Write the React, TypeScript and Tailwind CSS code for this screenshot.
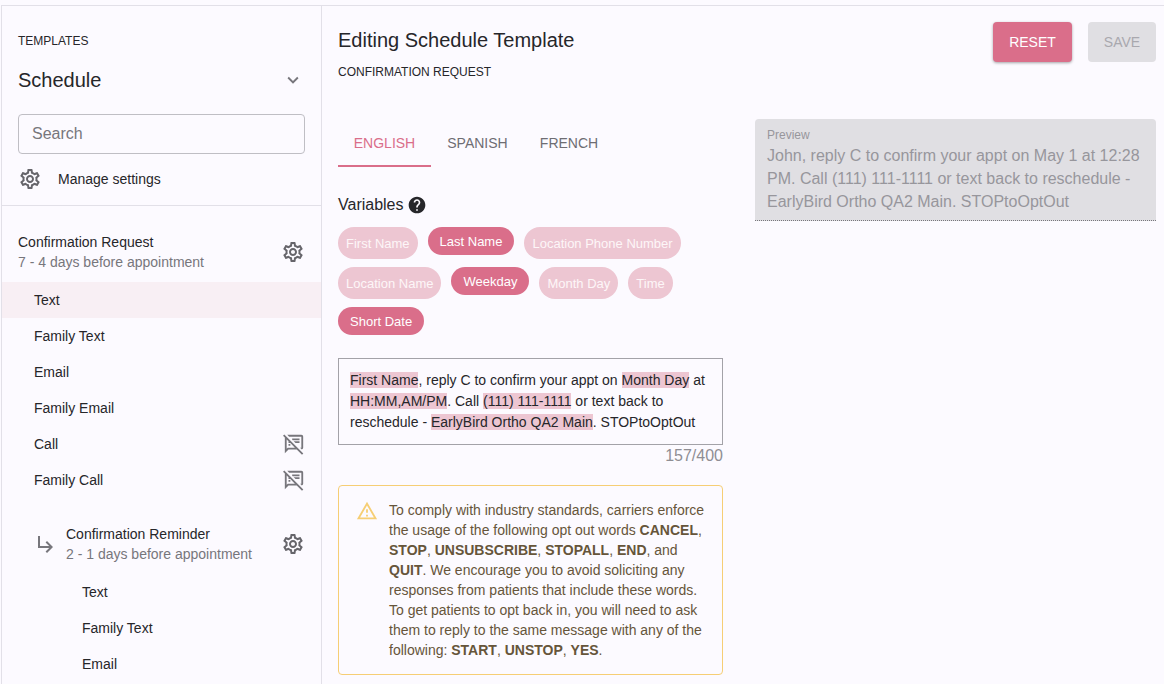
import React from "react";
import {
  MdExpandMore,
  MdHelp,
  MdOutlineSettings,
  MdOutlineSpeakerNotesOff,
  MdOutlineWarningAmber,
  MdSubdirectoryArrowRight,
} from "react-icons/md";

const FIRST_ROWS = [
  { label: "Text", active: true },
  { label: "Family Text" },
  { label: "Email" },
  { label: "Family Email" },
  { label: "Call", off: true },
  { label: "Family Call", off: true },
];

const CHIP_ROWS = [
  [
    { label: "First Name" },
    { label: "Last Name", on: true },
    { label: "Location Phone Number" },
  ],
  [
    { label: "Location Name" },
    { label: "Weekday", on: true },
    { label: "Month Day" },
    { label: "Time" },
  ],
  [{ label: "Short Date", on: true }],
];

function Chip({ label, on }: { label: string; on?: boolean }) {
  if (on) {
    return (
      <span className="flex h-7 items-center rounded-full bg-[#da6e8a] px-3 pt-px text-[13px] text-white">
        {label}
      </span>
    );
  }
  return (
    <span className="flex h-8 items-center rounded-full bg-[#edc6d2] px-2 pt-px text-[13px] text-[#fdf6f8]">
      {label}
    </span>
  );
}

function Mark({ children }: { children: React.ReactNode }) {
  return <span className="bg-[#edc6d2]">{children}</span>;
}

function Sidebar() {
  return (
    <aside className="w-[320px] shrink-0 border-r border-[#e2e0e8]">
      <div className="px-4 pt-[26px]">
        <div className="text-xs leading-[18px] text-[#26262a]">TEMPLATES</div>
        <div className="mt-[16px] flex h-7 items-center justify-between pr-px">
          <span className="text-xl text-[#26262a]">Schedule</span>
          <MdExpandMore className="text-[22px] text-[#77767c]" />
        </div>
        <div className="mt-[20px] flex h-10 items-center rounded border border-[#bfbec4] px-[13px] text-base text-[#77767c]">
          Search
        </div>
        <div className="mt-[13px] flex h-[24px] items-center">
          <MdOutlineSettings className="text-[24px] text-[#66656b]" />
          <span className="ml-4 text-sm text-[#26262a]">Manage settings</span>
        </div>
      </div>
      <div className="mt-[14px] border-t border-[#e2e0e8] pt-[26px]">
        <div className="flex h-10 items-center justify-between pl-4 pr-4">
          <div>
            <div className="text-sm leading-5 text-[#26262a]">Confirmation Request</div>
            <div className="text-sm leading-5 text-[#77767c]">7 - 4 days before appointment</div>
          </div>
          <MdOutlineSettings className="text-[24px] text-[#66656b]" />
        </div>
        <div className="mt-[10px]">
          {FIRST_ROWS.map((row) => (
            <div
              key={row.label}
              className={`flex h-9 items-center justify-between pl-8 pr-4 text-sm text-[#26262a] ${row.active ? "bg-[#f8eff4]" : ""}`}
            >
              {row.label}
              {row.off && <MdOutlineSpeakerNotesOff className="text-[22px] text-[#77767c]" />}
            </div>
          ))}
        </div>
        <div className="mt-[26px] flex h-10 items-center justify-between pl-8 pr-4">
          <div className="flex items-center">
            <MdSubdirectoryArrowRight className="text-[24px] text-[#77767c]" />
            <div className="ml-2">
              <div className="text-sm leading-5 text-[#26262a]">Confirmation Reminder</div>
              <div className="text-sm leading-5 text-[#77767c]">2 - 1 days before appointment</div>
            </div>
          </div>
          <MdOutlineSettings className="text-[24px] text-[#66656b]" />
        </div>
        <div className="mt-[10px]">
          {["Text", "Family Text", "Email"].map((label) => (
            <div key={label} className="flex h-9 items-center pl-20 text-sm text-[#26262a]">
              {label}
            </div>
          ))}
        </div>
      </div>
    </aside>
  );
}

export default function App() {
  return (
    <div className="h-[684px] w-[1164px] overflow-hidden bg-[#fcfaff] pl-px pt-[5px] font-['Liberation_Sans',Arial,sans-serif]">
      <div className="flex h-[679px] border-l border-t border-[#e2e0e8]">
        <Sidebar />
        <main className="min-w-0 flex-1 pl-4 pr-2">
          <div className="flex justify-between pt-4">
            <div>
              <h1 className="mt-1 text-xl leading-[28px] text-[#26262a]">Editing Schedule Template</h1>
              <div className="mt-[9px] text-xs leading-[18px] text-[#26262a]">CONFIRMATION REQUEST</div>
            </div>
            <div className="flex gap-4">
              <button className="h-10 w-[79px] rounded bg-[#da6e8a] text-sm text-white shadow-[0_1px_3px_rgba(0,0,0,0.35)]">
                RESET
              </button>
              <button className="h-10 w-[68px] rounded bg-[#e0dfe3] text-sm text-[#a9a8ae]">SAVE</button>
            </div>
          </div>
          <div className="mt-[37px] flex gap-8">
            <div className="w-[385px]">
              <div className="flex pt-px text-sm">
                <div className="flex h-[48px] w-[93px] items-center justify-center border-b-2 border-[#da6e8a] pt-0.5 text-[#da6e8a]">
                  ENGLISH
                </div>
                <div className="flex h-[48px] w-[93px] items-center justify-center text-[#6e6d73]">SPANISH</div>
                <div className="flex h-[48px] w-[90px] items-center justify-center text-[#6e6d73]">FRENCH</div>
              </div>
              <div className="mt-[26px] flex h-6 items-center text-base text-[#26262a]">
                Variables
                <MdHelp className="ml-[3px] text-[20px]" />
              </div>
              <div className="mt-[10px] flex flex-col gap-2">
                {CHIP_ROWS.map((row, i) => (
                  <div key={i} className="flex items-start gap-[10px]">
                    {row.map((chip) => (
                      <Chip key={chip.label} label={chip.label} on={chip.on} />
                    ))}
                  </div>
                ))}
              </div>
              <div className="mt-[23px] h-[87px] border border-[#a3a2a8] px-[11px] py-[11px] text-sm leading-[21px] text-[#26262a]">
                <Mark>First Name</Mark>, reply C to confirm your appt on <Mark>Month Day</Mark> at{" "}
                <Mark>HH:MM,AM/PM</Mark>. Call <Mark>(111) 111-1111</Mark> or text back to reschedule -{" "}
                <Mark>EarlyBird Ortho QA2 Main</Mark>. STOPtoOptOut
              </div>
              <div className="mt-px text-right text-base leading-5 text-[#8f8e94]">157/400</div>
              <div className="mt-[19px] flex h-[190px] rounded border border-[#f6ce75] pl-[17px] pr-2 pt-[14px]">
                <MdOutlineWarningAmber className="shrink-0 text-[22px] text-[#f6ce75]" />
                <p className="ml-[11px] text-sm leading-5 text-[#66553a]">
                  To comply with industry standards, carriers enforce the usage of the following opt out words{" "}
                  <b>CANCEL</b>, <b>STOP</b>, <b>UNSUBSCRIBE</b>, <b>STOPALL</b>, <b>END</b>, and <b>QUIT</b>. We
                  encourage you to avoid soliciting any responses from patients that include these words. To get
                  patients to opt back in, you will need to ask them to reply to the same message with any of the
                  following: <b>START</b>, <b>UNSTOP</b>, <b>YES</b>.
                </p>
              </div>
            </div>
            <div className="mt-px h-[102px] w-[401px] rounded-t border-b border-dotted border-[#77767c] bg-[#e0dfe3] px-3 pt-2">
              <div className="text-xs leading-[17px] text-[#97969c]">Preview</div>
              <div className="text-base leading-[23px] text-[#97969c]">
                John, reply C to confirm your appt on May 1 at 12:28 PM. Call (111) 111-1111 or text back to reschedule
                - EarlyBird Ortho QA2 Main. STOPtoOptOut
              </div>
            </div>
          </div>
        </main>
      </div>
    </div>
  );
}
